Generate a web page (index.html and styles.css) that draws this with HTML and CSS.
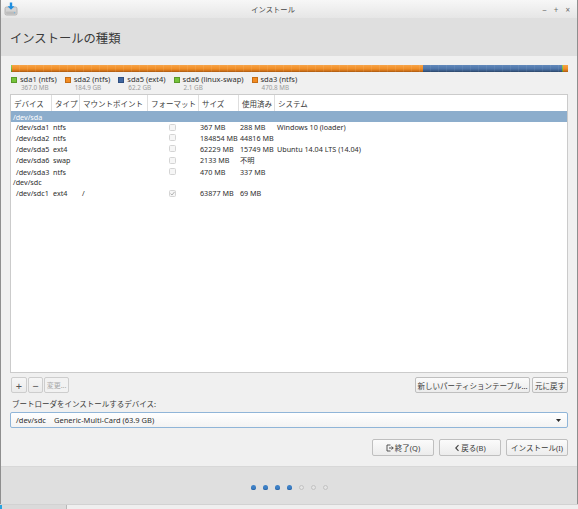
FILE: index.html
```html
<!DOCTYPE html>
<html lang="ja">
<head>
<meta charset="utf-8">
<title>インストール</title>
<link rel="stylesheet" href="styles.css">
</head>
<body>
<div class="window">
  <div class="titlebar">
    <svg class="appicon" width="14" height="14" viewBox="0 0 14 14">
      <rect x="1" y="5" width="12" height="8" rx="1.5" fill="#d4d4d4" stroke="#a8a8a8" stroke-width="0.8"/>
      <rect x="2" y="9.5" width="10" height="2.5" rx="0.8" fill="#bdbdbd"/>
      <circle cx="10.5" cy="10.7" r="0.6" fill="#6fb8e8"/>
      <path d="M7 0.5 V6" stroke="#1e8ee0" stroke-width="2.4"/>
      <path d="M3.6 4.2 L7 7.8 L10.4 4.2 Z" fill="#1e8ee0"/>
    </svg>
    <div class="wintitle">インストール</div>
    <div class="controls"><span>−</span><span>+</span><span>×</span></div>
  </div>
  <div class="header"><h1>インストールの種類</h1></div>
  <div class="content">
    <div class="partbar">
      <div class="seg green s1"></div>
      <div class="seg orange s2"></div>
      <div class="seg blue s3"></div>
      <div class="seg green s4"></div>
      <div class="seg orange s5"></div>
    </div>
    <div class="legend">
      <div class="litem"><span class="sw green"></span><div><div class="lname">sda1 (ntfs)</div><div class="lsize">367.0 MB</div></div></div>
      <div class="litem"><span class="sw orange"></span><div><div class="lname">sda2 (ntfs)</div><div class="lsize">184.9 GB</div></div></div>
      <div class="litem"><span class="sw blue"></span><div><div class="lname">sda5 (ext4)</div><div class="lsize">62.2 GB</div></div></div>
      <div class="litem"><span class="sw green"></span><div><div class="lname">sda6 (linux-swap)</div><div class="lsize">2.1 GB</div></div></div>
      <div class="litem"><span class="sw orange"></span><div><div class="lname">sda3 (ntfs)</div><div class="lsize">470.8 MB</div></div></div>
    </div>
    <div class="table">
      <div class="thead">
        <div class="c c1">デバイス</div>
        <div class="c c2">タイプ</div>
        <div class="c c3">マウントポイント</div>
        <div class="c c4">フォーマット</div>
        <div class="c c5">サイズ</div>
        <div class="c c6">使用済み</div>
        <div class="c c7">システム</div>
      </div>
      <div class="row group selected">/dev/sda</div>
      <div class="row r105">
        <div class="c c1">/dev/sda1</div><div class="c c2">ntfs</div><div class="c c3"></div>
        <div class="c c4"><span class="cb"></span></div>
        <div class="c c5">367 MB</div><div class="c c6">288 MB</div><div class="c c7">Windows 10 (loader)</div>
      </div>
      <div class="row r105">
        <div class="c c1">/dev/sda2</div><div class="c c2">ntfs</div><div class="c c3"></div>
        <div class="c c4"><span class="cb"></span></div>
        <div class="c c5">184854 MB</div><div class="c c6">44816 MB</div><div class="c c7"></div>
      </div>
      <div class="row r11">
        <div class="c c1">/dev/sda5</div><div class="c c2">ext4</div><div class="c c3"></div>
        <div class="c c4"><span class="cb"></span></div>
        <div class="c c5">62229 MB</div><div class="c c6">15749 MB</div><div class="c c7">Ubuntu 14.04 LTS (14.04)</div>
      </div>
      <div class="row r12">
        <div class="c c1">/dev/sda6</div><div class="c c2">swap</div><div class="c c3"></div>
        <div class="c c4"><span class="cb"></span></div>
        <div class="c c5">2133 MB</div><div class="c c6">不明</div><div class="c c7"></div>
      </div>
      <div class="row r11">
        <div class="c c1">/dev/sda3</div><div class="c c2">ntfs</div><div class="c c3"></div>
        <div class="c c4"><span class="cb"></span></div>
        <div class="c c5">470 MB</div><div class="c c6">337 MB</div><div class="c c7"></div>
      </div>
      <div class="row group r105">/dev/sdc</div>
      <div class="row r11">
        <div class="c c1">/dev/sdc1</div><div class="c c2">ext4</div><div class="c c3">/</div>
        <div class="c c4"><span class="cb checked"><svg width="7" height="7" viewBox="0 0 7 7"><path d="M1.5 3.6 L3 5 L5.6 1.8" fill="none" stroke="#a9a9a9" stroke-width="0.9"/></svg></span></div>
        <div class="c c5">63877 MB</div><div class="c c6">69 MB</div><div class="c c7"></div>
      </div>
    </div>
    <div class="toolbar">
      <div class="tleft">
        <div class="btn tb plus">+</div>
        <div class="btn tb minus">−</div>
        <div class="btn tb change">変更...</div>
      </div>
      <div class="tright">
        <div class="btn tb newtable">新しいパーティションテーブル...</div>
        <div class="btn tb revert">元に戻す</div>
      </div>
    </div>
    <div class="bootlabel">ブートローダをインストールするデバイス:</div>
    <div class="select">
      <span class="dev">/dev/sdc</span><span class="devname">Generic-Multi-Card (63.9 GB)</span>
      <svg class="arrow" width="5" height="3" viewBox="0 0 5 3"><path d="M0 0 H5 L2.5 3 Z" fill="#2a2a2a"/></svg>
    </div>
    <div class="actions">
      <div class="btn act"><svg width="8" height="8" viewBox="0 0 8 8"><path d="M4.5 1 H1 V7 H4.5" fill="none" stroke="#444" stroke-width="0.9"/><path d="M3 4 H7.2 M5.6 2.4 L7.2 4 L5.6 5.6" fill="none" stroke="#444" stroke-width="0.9"/></svg>終了(Q)</div>
      <div class="btn act"><svg width="6" height="8" viewBox="0 0 6 8"><path d="M4.5 1.2 L1.8 4 L4.5 6.8" fill="none" stroke="#444" stroke-width="1.1"/></svg>戻る(B)</div>
      <div class="btn act">インストール(I)</div>
    </div>
  </div>
  <div class="footer">
    <span class="dot on"></span><span class="dot on"></span><span class="dot on"></span><span class="dot on"></span>
    <span class="dot off"></span><span class="dot off"></span><span class="dot off"></span>
  </div>
</div>
<div class="taskbar"><div class="task"><span class="taskmark"></span></div></div>
</body>
</html>
```
FILE: styles.css
```css
* { box-sizing: border-box; }
html, body { margin: 0; padding: 0; }
body {
  width: 578px;
  height: 509px;
  overflow: hidden;
  background: #ececec;
  font-family: "Noto Sans", "Noto Sans CJK JP", sans-serif;
  font-size: 7.5px;
  color: #3c3c3c;
}
.window {
  width: 578px;
  height: 504px;
  display: flex;
  flex-direction: column;
  border-left: 1px solid #8e8e8e;
  border-right: 1px solid #8e8e8e;
}
.titlebar {
  height: 18px;
  flex: none;
  display: flex;
  align-items: center;
  background: linear-gradient(#f7f7f7, #e6e6e6);
}
.appicon { margin-left: 3px; flex: none; }
.wintitle {
  flex: 1;
  text-align: center;
  font-size: 7.3px;
  color: #444;
  padding-right: 14px;
}
.controls {
  display: flex;
  gap: 7px;
  padding-right: 7px;
  font-size: 8px;
  color: #6a6a6a;
}
.header {
  height: 38px;
  flex: none;
  background: #dfdfdf;
  padding: 14px 0 0 9px;
}
.header h1 {
  margin: 0;
  font-weight: normal;
  font-size: 12.3px;
  line-height: 14px;
  color: #3a3a3a;
}
.content {
  flex: 1;
  background: #f0f0f0;
  padding: 9px 9px 0 9px;
  display: flex;
  flex-direction: column;
}
.partbar {
  height: 7px;
  margin-left: 1px;
  display: flex;
  flex: none;
}
.seg { height: 7px; }
.seg.s1 { width: 1px; }
.seg.s2 { flex: 184854; }
.seg.s3 { flex: 62229; }
.seg.s4 { width: 1.5px; }
.seg.s5 { width: 5px; }
.seg.orange {
  background:
    repeating-linear-gradient(90deg, transparent 0 7px, rgba(255,255,255,0.08) 7px 8px),
    linear-gradient(#f7a448, #f08d25 55%, #d3741a 80%, #a85a12);
}
.seg.blue {
  background:
    repeating-linear-gradient(90deg, transparent 0 7px, rgba(255,255,255,0.06) 7px 8px),
    linear-gradient(#6289bb, #4e75a9 55%, #3b5d8a 80%, #2b4668);
}
.seg.green { background: linear-gradient(#93d55a, #73bd35 60%, #4f8e22); }
.legend {
  display: flex;
  gap: 8px;
  margin: 3px 0 0 1px;
  height: 16px;
  flex: none;
}
.litem { display: flex; align-items: flex-start; }
.sw {
  width: 6px;
  height: 6px;
  margin: 2px 3px 0 0;
  flex: none;
}
.sw.green { background: #75c33a; border: 0.5px solid #5a9a2a; }
.sw.orange { background: #f28b22; border: 0.5px solid #c56d15; }
.sw.blue { background: #3f66a0; border: 0.5px solid #2f4f80; }
.lname { font-size: 7.5px; line-height: 9px; color: #2f2f2f; }
.lsize { font-size: 6.3px; line-height: 7px; color: #9a9a9a; padding-left: 1px; }
.table {
  margin-top: 3px;
  height: 279px;
  flex: none;
  background: #fff;
  border: 1px solid #cbcbcb;
}
.thead {
  height: 16px;
  display: flex;
  align-items: stretch;
  color: #3a3a3a;
}
.thead .c {
  display: flex;
  align-items: center;
  padding-left: 3px;
  border-left: 1px solid #dedede;
}
.thead .c1 { border-left: none; padding-left: 3px; }
.c { flex: none; white-space: nowrap; }
.c1 { width: 40px; }
.c2 { width: 28px; }
.c3 { width: 68px; }
.c4 { width: 51px; }
.c5 { width: 40px; }
.c6 { width: 36px; }
.c7 { flex: 1; }
.row {
  display: flex;
  align-items: center;
  color: #2e2e2e;
  font-size: 7.2px;
}
.row .c1 { padding-left: 5px; }
.row .c2 { padding-left: 2px; }
.row .c3 { padding-left: 3px; }
.row .c4 { display: flex; justify-content: center; }
.row .c5 { padding-left: 2px; }
.row .c6 { padding-left: 2px; }
.row .c7 { padding-left: 3px; }
.row.group { padding-left: 2px; }
.row.selected {
  height: 11px;
  background: #8cadcc;
  color: #fff;
}
.r105 { height: 10.5px; }
.r11 { height: 11px; }
.r12 { height: 12px; }
.cb {
  width: 7px;
  height: 7px;
  border: 1px solid #d4d4d4;
  border-radius: 1.5px;
  background: #f6f6f6;
  display: flex;
  align-items: center;
  justify-content: center;
}
.cb svg { flex: none; }
.btn {
  display: flex;
  align-items: center;
  justify-content: center;
  background: linear-gradient(#fbfbfb, #ececec);
  border: 1px solid #bfbfbf;
  border-radius: 2px;
  color: #3a3a3a;
  white-space: nowrap;
}
.toolbar {
  margin-top: 4px;
  height: 16px;
  display: flex;
  justify-content: space-between;
  flex: none;
}
.tleft { display: flex; gap: 1px; padding-left: 1px; }
.tright { display: flex; gap: 2px; }
.tb { height: 16px; }
.plus, .minus {
  width: 16px;
  font-size: 11px;
  color: #555;
  background: linear-gradient(#f6f6f6, #ebebeb);
  border-color: #cdcdcd;
}
.minus { width: 15px; }
.change {
  width: 25px;
  color: #a8a8a8;
  font-size: 7px;
  background: #f2f2f2;
  border-color: #cdcdcd;
}
.newtable { width: 115px; }
.revert { width: 36px; }
.bootlabel {
  margin-top: 5px;
  height: 12px;
  line-height: 12px;
  padding-left: 2px;
  color: #3a3a3a;
  flex: none;
}
.select {
  margin-top: 2px;
  height: 16px;
  flex: none;
  display: flex;
  align-items: center;
  padding-left: 5px;
  background: linear-gradient(#ffffff, #f3f3f3);
  border: 1px solid #90b5d8;
  border-radius: 2px;
  color: #2e2e2e;
}
.dev { width: 38px; }
.devname { flex: 1; }
.arrow { margin-right: 6px; }
.actions {
  margin-top: 11px;
  display: flex;
  justify-content: flex-end;
  gap: 5px;
  flex: none;
}
.act {
  width: 62px;
  height: 17px;
  gap: 1px;
}
.footer {
  height: 38px;
  flex: none;
  background: #dfdfdf;
  border-top: 1px solid #d8d8d8;
  display: flex;
  justify-content: center;
  align-items: center;
  gap: 7px;
  padding-top: 4px;
}
.dot {
  width: 5px;
  height: 4.5px;
  border-radius: 2.5px;
}
.dot.on { background: #3d80c6; box-shadow: inset 0 -1px 0 #2c66a6; }
.dot.off { border: 1px solid #c2c2c2; background: #e4e4e4; height: 5px; }
.taskbar {
  height: 5px;
  background: #efefef;
  border-top: 1px solid #d2d2d2;
  display: flex;
}
.task {
  width: 67px;
  height: 4px;
  background: #dadada;
  border-right: 1px solid #b8b8b8;
  position: relative;
}
.taskmark {
  position: absolute;
  left: 0;
  top: 0;
  width: 2px;
  height: 4px;
  background: #2aa3e0;
}
```
